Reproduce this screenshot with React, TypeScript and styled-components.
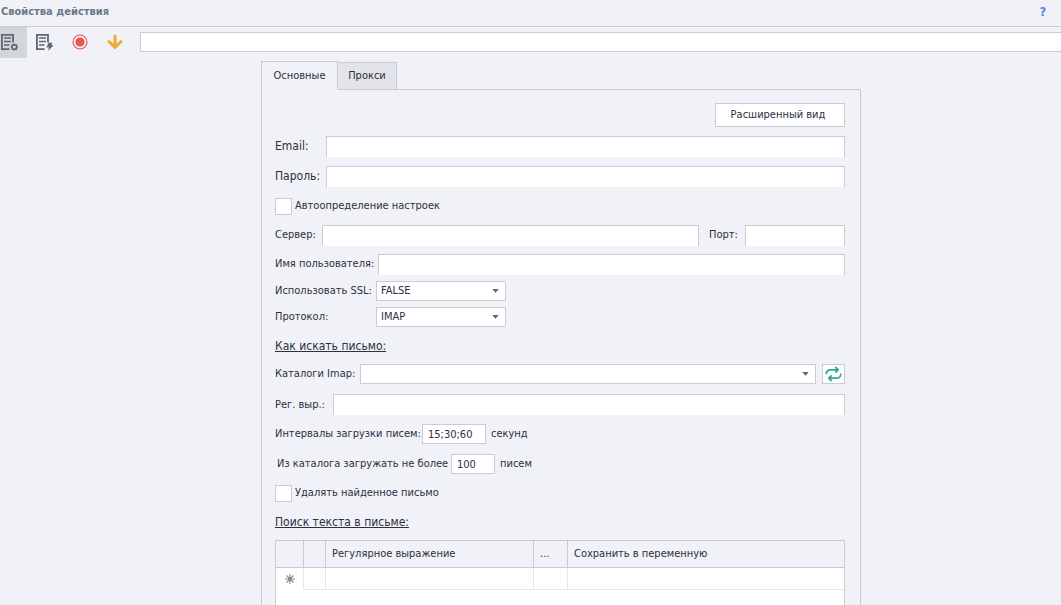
import React from "react";
import styled, { createGlobalStyle } from "styled-components";

const ink = "#2b303e";
const line = "#c9ccd5";
const surface = "#f0f2f7";

const GlobalStyle = createGlobalStyle`
  * { box-sizing: border-box; }
  body {
    margin: 0;
    background: ${surface};
    color: ${ink};
    font: 11px/16px "DejaVu Sans Condensed", "Noto Sans", sans-serif;
  }
  button, input, select { font: inherit; color: inherit; border-radius: 0; }
`;

const Page = styled.div`
  display: flex;
  flex-direction: column;
  height: 100vh;
  overflow: hidden;
`;

const TitleBar = styled.header`
  display: flex;
  align-items: center;
  justify-content: space-between;
  flex: none;
  height: 27px;
  padding: 0 12px 2px 1px;
  border-bottom: 1px solid ${line};
`;

const Title = styled.h1`
  margin: 0;
  font-size: 11px;
  color: #6b7885;
`;

const HelpButton = styled.button`
  width: 12px;
  padding: 0;
  border: 0;
  background: none;
  font-size: 13px;
  font-weight: bold;
  color: #5b86dc;
`;

const Toolbar = styled.div`
  display: flex;
  align-items: center;
  flex: none;
  height: 31px;
`;

const ToolButton = styled.button<{ $active?: boolean; $width: number }>`
  display: flex;
  align-items: center;
  justify-content: ${(p) => (p.$active ? "flex-start" : "center")};
  width: ${(p) => p.$width}px;
  height: 31px;
  padding: 0 0 1px;
  border: 0;
  background: ${(p) => (p.$active ? "#d2d5da" : "none")};
`;

const ToolInput = styled.input`
  flex: 1;
  min-width: 0;
  height: 20px;
  margin: 0 0 1px 8px;
  padding: 0 4px;
  border: 1px solid ${line};
  border-right: 0;
  background: #fff;
`;

const Main = styled.main`
  display: flex;
  flex-direction: column;
  flex: 1;
  min-height: 0;
  max-width: 861px;
  padding: 3px 0 0 261px;
`;

const Tabs = styled.div`
  display: flex;
  align-items: flex-end;
  z-index: 1;
  margin-bottom: -1px;
`;

const Tab = styled.button<{ $active?: boolean }>`
  width: ${(p) => (p.$active ? 77 : 59)}px;
  height: ${(p) => (p.$active ? 29 : 28)}px;
  padding: 0;
  border: 1px solid ${line};
  border-left-width: ${(p) => (p.$active ? 1 : 0)}px;
  border-bottom-color: ${(p) => (p.$active ? surface : line)};
  background: ${(p) => (p.$active ? surface : "#e2e4e9")};
`;

const Panel = styled.form`
  display: flex;
  flex-direction: column;
  flex: 1;
  min-height: 0;
  padding: 13px 15px 0 13px;
  border: 1px solid ${line};
  border-bottom: 0;
`;

const Button = styled.button`
  align-self: flex-end;
  flex: none;
  width: 130px;
  height: 24px;
  padding: 0 4px 0 0;
  border: 1px solid ${line};
  background: #fff;
`;

const Row = styled.div<{ $gap: number }>`
  display: flex;
  align-items: center;
  flex: none;
  margin-top: ${(p) => p.$gap}px;
`;

const Label = styled.label<{ $width: number; $large?: boolean; $indent?: number }>`
  flex: none;
  width: ${(p) => p.$width}px;
  padding: 0 0 2px ${(p) => p.$indent ?? 0}px;
  font-size: ${(p) => (p.$large ? 12 : 11)}px;
  white-space: nowrap;
`;

const TextInput = styled.input<{ $width?: number }>`
  flex: ${(p) => (p.$width ? "none" : "1")};
  width: ${(p) => (p.$width ? p.$width + "px" : "auto")};
  min-width: 0;
  height: 21px;
  padding: 0 4px;
  border: 1px solid ${line};
  border-bottom: 0;
  background: #fff;
`;

const SmallInput = styled.input<{ $width: number }>`
  width: ${(p) => p.$width}px;
  height: 20px;
  padding: 0 5px;
  border: 1px solid ${line};
  background: #fff;
`;

const PlainLabel = styled(Label)`
  padding-bottom: 0;
`;

const Unit = styled.span`
  margin-left: 5px;
`;

const SelectBox = styled.div<{ $width?: number }>`
  position: relative;
  display: flex;
  flex: ${(p) => (p.$width ? "none" : "1")};
  width: ${(p) => (p.$width ? p.$width + "px" : "auto")};

  select {
    appearance: none;
    width: 100%;
    height: 20px;
    padding: 0 20px 0 4px;
    border: 1px solid ${line};
    background: #fff;
  }

  svg {
    position: absolute;
    top: 8px;
    right: 7px;
    pointer-events: none;
  }
`;

const RefreshButton = styled.button`
  display: flex;
  align-items: center;
  justify-content: center;
  width: 23px;
  height: 20px;
  margin-left: 6px;
  padding: 0;
  border: 1px solid ${line};
  background: #fff;
`;

const CheckInput = styled.input`
  appearance: none;
  width: 17px;
  height: 17px;
  margin: 0 3px 0 0;
  border: 1px solid ${line};
  background: #fff;
`;

const CheckLabel = styled.label`
  display: flex;
  align-items: center;
  height: 18px;
`;

const SectionTitle = styled.h2<{ $gap: number }>`
  flex: none;
  margin: ${(p) => p.$gap}px 0 0;
  font-size: 12px;
  line-height: 20px;
  font-weight: normal;
  text-decoration: underline;
`;

const Grid = styled.div`
  flex: 1;
  min-height: 65px;
  margin-top: 8px;
  border: 1px solid ${line};
  border-bottom: 0;
  background: #fff;
`;

const Table = styled.table`
  width: 100%;
  table-layout: fixed;
  border-collapse: separate;
  border-spacing: 0;

  th, td {
    padding: 0 6px;
    border: 0 solid ${line};
    border-width: 0 1px 1px 0;
    text-align: left;
    font-weight: normal;
  }
  th { height: 27px; background: ${surface}; }
  td { height: 22px; border-color: #e6e8ed; }
  td:first-child { padding: 0; border-bottom-color: #fff; text-align: center; }
  th:last-child, td:last-child { border-right: 0; }
`;

const Mark = styled.svg`
  display: block;
  margin: 0 auto;
`;

const Arrow = () => (
  <svg width="7" height="4" viewBox="0 0 7 4" aria-hidden="true">
    <path d="M.3 0h6.400L3.500 3.800z" fill="#5f636d" />
  </svg>
);

const Sheet = () => (
  <>
    <path d="M13 9.500V1.900H1.900V16.100H9.500" fill="none" stroke="#5d6577" strokeWidth="1.800" />
    <path d="M4 5h7M4 8.500h7M4 12h5.500" stroke="#5d6577" strokeWidth="1.500" />
  </>
);

const SheetGearIcon = () => (
  <svg width="19" height="18" viewBox="0 0 19 18" aria-hidden="true">
    <Sheet />
    <circle cx="14.300" cy="14" r="2.300" fill="none" stroke="#5d6577" strokeWidth="1.600" />
    <path
      d="M14.300 10.500v1M14.300 16.500v1M10.800 14h1M16.800 14h1M11.800 11.500l.8.800M16 15.700l.8.800M16.800 11.500l-.8.800M12.600 15.700l-.8.800"
      stroke="#5d6577"
      strokeWidth="1.400"
    />
  </svg>
);

const SheetBoltIcon = () => (
  <svg width="19" height="18" viewBox="0 0 19 18" aria-hidden="true">
    <Sheet />
    <path d="M13.500 9.800h3.800l-.8 2.400h2.300L13 17.800l1-3.300h-2.500z" fill="#5d6577" />
  </svg>
);

const RecordIcon = () => (
  <svg width="16" height="16" viewBox="0 0 16 16" aria-hidden="true">
    <circle cx="8" cy="8" r="7" fill="none" stroke="#ea5450" strokeWidth="1.100" />
    <circle cx="8" cy="8" r="4.600" fill="#ea5450" />
  </svg>
);

const DownIcon = () => (
  <svg width="16" height="16" viewBox="0 0 16 16" aria-hidden="true">
    <path
      d="M8 2v11M2 7.500l6 6 6-6"
      fill="none"
      stroke="#eeaa33"
      strokeWidth="3"
      strokeLinecap="round"
      strokeLinejoin="round"
    />
  </svg>
);

const RefreshIcon = () => (
  <svg width="17" height="16" viewBox="0 0 17 16" fill="none" stroke="#2eaa86" strokeWidth="1.800" strokeLinecap="round" strokeLinejoin="round" aria-hidden="true">
    <path d="M1.300 7.500C1.600 5 3.200 3.800 5.500 3.800H13M10.800 1.500L13.200 3.800l-2.400 2.300" />
    <path d="M15.700 8.500c-.3 2.500-1.900 3.700-4.200 3.700H4M6.200 9.900L3.800 12.200l2.400 2.300" />
  </svg>
);

export default function App() {
  return (
    <>
      <GlobalStyle />
      <Page>
        <TitleBar>
          <Title>Свойства действия</Title>
          <HelpButton type="button">?</HelpButton>
        </TitleBar>
        <Toolbar>
          <ToolButton type="button" $active $width={27} aria-label="Свойства">
            <SheetGearIcon />
          </ToolButton>
          <ToolButton type="button" $width={35} aria-label="Действия">
            <SheetBoltIcon />
          </ToolButton>
          <ToolButton type="button" $width={35} aria-label="Запись">
            <RecordIcon />
          </ToolButton>
          <ToolButton type="button" $width={35} aria-label="Вниз">
            <DownIcon />
          </ToolButton>
          <ToolInput aria-label="Комментарий" />
        </Toolbar>
        <Main>
          <Tabs role="tablist">
            <Tab type="button" role="tab" aria-selected="true" $active>Основные</Tab>
            <Tab type="button" role="tab" aria-selected="false">Прокси</Tab>
          </Tabs>
          <Panel>
            <Button type="button">Расширенный вид</Button>
            <Row $gap={9}>
              <Label htmlFor="email" $width={51} $large>Email:</Label>
              <TextInput id="email" />
            </Row>
            <Row $gap={9}>
              <Label htmlFor="password" $width={51} $large>Пароль:</Label>
              <TextInput id="password" type="password" />
            </Row>
            <Row $gap={10}>
              <CheckLabel><CheckInput type="checkbox" />Автоопределение настроек</CheckLabel>
            </Row>
            <Row $gap={10}>
              <Label htmlFor="server" $width={47}>Сервер:</Label>
              <TextInput id="server" />
              <Label htmlFor="port" $width={46} $indent={10}>Порт:</Label>
              <TextInput id="port" $width={100} />
            </Row>
            <Row $gap={8}>
              <Label htmlFor="user" $width={103}>Имя пользователя:</Label>
              <TextInput id="user" />
            </Row>
            <Row $gap={6}>
              <PlainLabel htmlFor="ssl" $width={101}>Использовать SSL:</PlainLabel>
              <SelectBox $width={130}>
                <select id="ssl"><option>FALSE</option></select>
                <Arrow />
              </SelectBox>
            </Row>
            <Row $gap={6}>
              <PlainLabel htmlFor="protocol" $width={101}>Протокол:</PlainLabel>
              <SelectBox $width={130}>
                <select id="protocol"><option>IMAP</option></select>
                <Arrow />
              </SelectBox>
            </Row>
            <SectionTitle $gap={9}>Как искать письмо:</SectionTitle>
            <Row $gap={8}>
              <PlainLabel htmlFor="folders" $width={85}>Каталоги Imap:</PlainLabel>
              <SelectBox>
                <select id="folders" />
                <Arrow />
              </SelectBox>
              <RefreshButton type="button" aria-label="Обновить"><RefreshIcon /></RefreshButton>
            </Row>
            <Row $gap={10}>
              <PlainLabel htmlFor="regex" $width={58}>Рег. выр.:</PlainLabel>
              <TextInput id="regex" />
            </Row>
            <Row $gap={9}>
              <PlainLabel htmlFor="intervals" $width={147}>Интервалы загрузки писем:</PlainLabel>
              <SmallInput id="intervals" $width={64} defaultValue="15;30;60" />
              <Unit>секунд</Unit>
            </Row>
            <Row $gap={10}>
              <PlainLabel htmlFor="limit" $width={176} $indent={2}>Из каталога загружать не более</PlainLabel>
              <SmallInput id="limit" $width={44} defaultValue="100" />
              <Unit>писем</Unit>
            </Row>
            <Row $gap={10}>
              <CheckLabel><CheckInput type="checkbox" />Удалять найденное письмо</CheckLabel>
            </Row>
            <SectionTitle $gap={10}>Поиск текста в письме:</SectionTitle>
            <Grid>
              <Table>
                <colgroup>
                  <col width="28" />
                  <col width="22" />
                  <col width="208" />
                  <col width="34" />
                  <col />
                </colgroup>
                <thead>
                  <tr>
                    <th />
                    <th />
                    <th>Регулярное выражение</th>
                    <th>...</th>
                    <th>Сохранить в переменную</th>
                  </tr>
                </thead>
                <tbody>
                  <tr>
                    <td>
                      <Mark width="10" height="10" viewBox="0 0 10 10" aria-hidden="true">
                        <path d="M5 0v10M0 5h10M1.500 1.500l7 7M8.500 1.500l-7 7" stroke="#8c8c90" strokeWidth="1.100" />
                        <circle cx="5" cy="5" r="2.200" fill="#8c8c90" />
                      </Mark>
                    </td>
                    <td />
                    <td />
                    <td />
                    <td />
                  </tr>
                </tbody>
              </Table>
            </Grid>
          </Panel>
        </Main>
      </Page>
    </>
  );
}
